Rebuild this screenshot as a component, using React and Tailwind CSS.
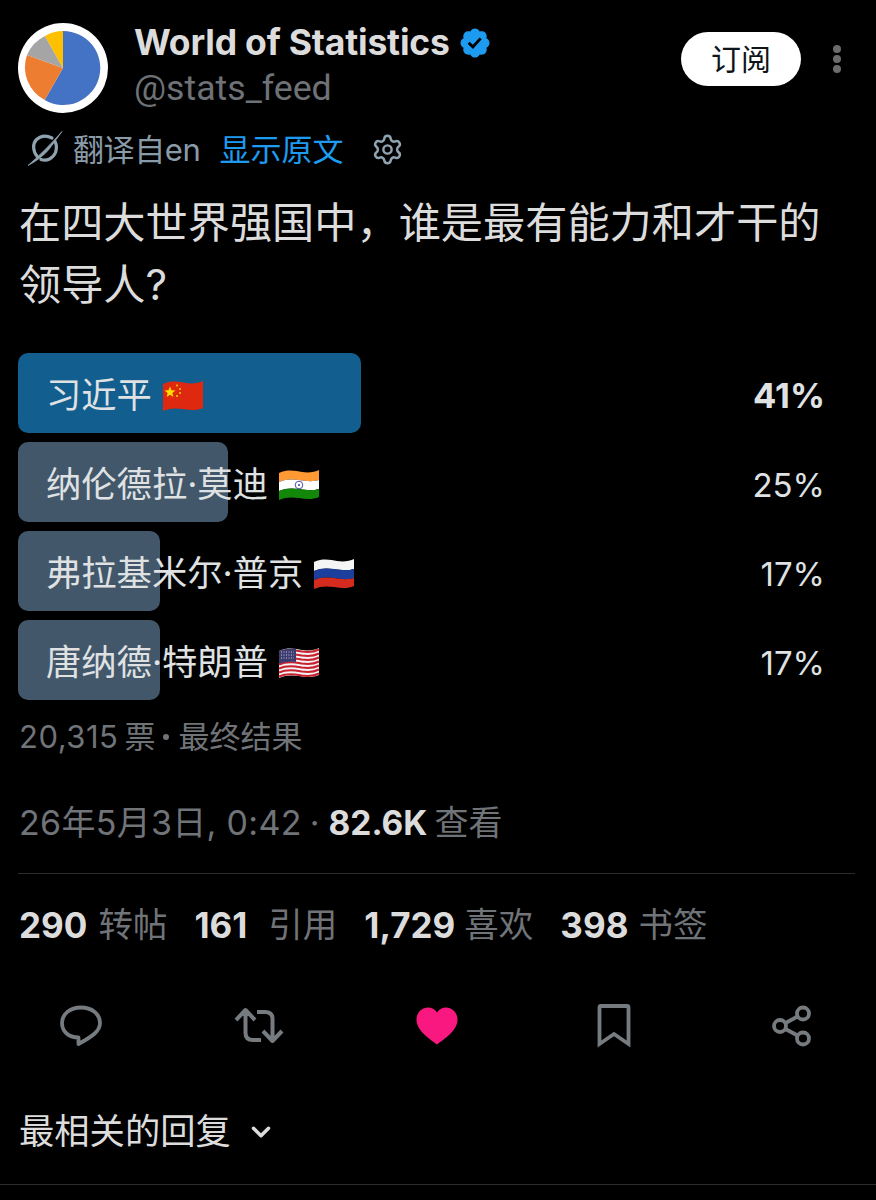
import React from "react";
import { Settings, ChevronDown } from "lucide-react";

const cjk = "font-['Inter','Noto_Sans_CJK_SC',sans-serif]";

function Avatar() {
  return (
    <div className="w-[90px] h-[90px] rounded-full bg-white shrink-0">
      <svg viewBox="0 0 90 90" className="w-[90px] h-[90px]">
        <path d="M45 45L45 8A37 37 0 1 1 26.7 77Z" fill="#4472c4" />
        <path d="M45 45L26.7 77A37 37 0 0 1 9 32Z" fill="#ed7d31" />
        <path d="M45 45L9 32A37 37 0 0 1 27 13Z" fill="#a5a5a5" />
        <path d="M45 45L27 13A37 37 0 0 1 45 8Z" fill="#ffc000" />
      </svg>
    </div>
  );
}

function Verified() {
  return (
    <svg viewBox="0 0 24 24" className="w-[34px] h-[34px]" fill="#1d9bf0">
      <path d="M22.25 12c0-1.43-.88-2.67-2.19-3.34.46-1.39.2-2.9-.81-3.91s-2.52-1.27-3.91-.81c-.66-1.31-1.91-2.19-3.34-2.19s-2.67.88-3.33 2.19c-1.4-.46-2.91-.2-3.92.81s-1.26 2.52-.8 3.91c-1.31.67-2.2 1.91-2.2 3.34s.89 2.67 2.2 3.34c-.46 1.39-.21 2.9.8 3.91s2.52 1.26 3.91.81c.67 1.31 1.91 2.19 3.34 2.19s2.68-.88 3.34-2.19c1.39.45 2.9.2 3.91-.81s1.27-2.52.81-3.91c1.31-.67 2.19-1.91 2.19-3.34zm-11.71 4.2L6.8 12.46l1.41-1.42 2.26 2.26 4.8-5.23 1.47 1.36-6.2 6.77z" />
    </svg>
  );
}

function Grok() {
  return (
    <svg viewBox="0 0 36 36" className="w-[36px] h-[36px]" fill="none" stroke="#8fa3b0">
      <path d="M10.500 26C5.500 20 5.500 12.500 9.500 8.500C14 4.500 20 4.500 25 7" strokeWidth="3.200" strokeLinecap="round" />
      <path d="M14 28.500C20 30.500 26 27.500 28.500 21.500C30 17 29.500 13.500 28 10.500" strokeWidth="3.200" strokeLinecap="round" />
      <path d="M1 34.500C12 25 24 13 35 0.500L21.500 19C15.500 25.500 8 31 1 34.500Z" fill="#8fa3b0" strokeWidth="0.800" />
    </svg>
  );
}

function FlagCN() {
  return (
    <svg viewBox="0 0 42 32" className="w-[42px] h-[32px]">
      <path d="M1 4C10 0 18 2 24 3C31 4 37 3 41 1V28C34 31 28 30 21 29C14 28 7 28 1 31Z" fill="#de2910" />
      <path d="M8 6.500l1.500 3.800 4 .2-3.100 2.500 1 3.900-3.400-2.200-3.400 2.200 1-3.900-3.100-2.500 4-.2z" fill="#ffde00" />
      <circle cx="15" cy="5.500" r="0.900" fill="#ffde00" />
      <circle cx="18" cy="9" r="0.900" fill="#ffde00" />
      <circle cx="18" cy="13" r="0.900" fill="#ffde00" />
      <circle cx="15" cy="16" r="0.900" fill="#ffde00" />
    </svg>
  );
}

function FlagIN() {
  return (
    <svg viewBox="0 0 42 32" className="w-[42px] h-[32px]">
      <path d="M1 4C10 0 18 2 24 3C31 4 37 3 41 1V11C34 13 28 12 21 11C14 10 7 10 1 13Z" fill="#ff9933" />
      <path d="M1 13C7 10 14 10 21 11C28 12 34 13 41 11V20C34 22 28 21 21 20C14 19 7 19 1 22Z" fill="#ffffff" />
      <path d="M1 22C7 19 14 19 21 20C28 21 34 22 41 20V28C34 31 28 30 21 29C14 28 7 28 1 31Z" fill="#138808" />
      <circle cx="21" cy="16" r="3.800" fill="none" stroke="#3b3b98" strokeWidth="0.900" />
      <circle cx="21" cy="16" r="1" fill="#3b3b98" />
    </svg>
  );
}

function FlagRU() {
  return (
    <svg viewBox="0 0 42 32" className="w-[42px] h-[32px]">
      <path d="M1 4C10 0 18 2 24 3C31 4 37 3 41 1V11C34 13 28 12 21 11C14 10 7 10 1 13Z" fill="#f5f5f5" />
      <path d="M1 13C7 10 14 10 21 11C28 12 34 13 41 11V20C34 22 28 21 21 20C14 19 7 19 1 22Z" fill="#1c3f9e" />
      <path d="M1 22C7 19 14 19 21 20C28 21 34 22 41 20V28C34 31 28 30 21 29C14 28 7 28 1 31Z" fill="#d52b1e" />
    </svg>
  );
}

function FlagUS() {
  const stripes = [0, 1, 2, 3, 4, 5, 6];
  return (
    <svg viewBox="0 0 42 32" className="w-[42px] h-[32px]">
      <path d="M1 4C10 0 18 2 24 3C31 4 37 3 41 1V28C34 31 28 30 21 29C14 28 7 28 1 31Z" fill="#f2f2f2" />
      {stripes.map((i) => (
        <path
          key={i}
          d={`M1 ${5.500 + i * 4}C10 ${1.500 + i * 4} 18 ${3.500 + i * 4} 24 ${4.500 + i * 4}C31 ${5.500 + i * 4} 37 ${4.500 + i * 4} 41 ${2.500 + i * 4}`}
          fill="none"
          stroke="#c8202f"
          strokeWidth="2"
        />
      ))}
      <path d="M1 4C6 2 11 1.500 18 2V15C11 14.500 6 15 1 17Z" fill="#3c3b6e" />
      <path d="M3 5h13M3 8h13M3 11h13" stroke="#c9c9e0" strokeWidth="1" strokeDasharray="1 1.500" />
    </svg>
  );
}

const rows = [
  { label: "习近平", flag: <FlagCN />, pct: "41%", w: "w-[343px]", bar: "bg-[#125e8f]", bold: true },
  { label: "纳伦德拉·莫迪", flag: <FlagIN />, pct: "25%", w: "w-[210px]", bar: "bg-[#42576a]" },
  { label: "弗拉基米尔·普京", flag: <FlagRU />, pct: "17%", w: "w-[142px]", bar: "bg-[#42576a]" },
  { label: "唐纳德·特朗普", flag: <FlagUS />, pct: "17%", w: "w-[142px]", bar: "bg-[#42576a]" },
];

function PollRow({ r }) {
  return (
    <div className="flex items-center h-[80px]">
      <div className="relative flex-1 h-full flex items-center">
        <div className={`absolute left-0 top-0 h-full rounded-[10px] ${r.w} ${r.bar}`} />
        <div className="relative pl-[28px] pt-[6px] flex items-center gap-[10px] text-[35.3px] leading-none text-[#dfe1e2]">
          <span>{r.label}</span>
          {r.flag}
        </div>
      </div>
      <span className={`pt-[6px] leading-none text-[#dfe1e2] ${r.bold ? "font-bold text-[34.5px]" : "text-[33px]"}`}>{r.pct}</span>
    </div>
  );
}

function Stat({ n, label, gap }) {
  return (
    <div className={`flex items-center ${gap}`}>
      <span className="font-bold text-[35px] text-[#dcdcdc]">{n}</span>
      <span className="text-[#707478] text-[34.5px]">{label}</span>
    </div>
  );
}

export default function App() {
  return (
    <div className={`w-[876px] h-[1200px] bg-black overflow-hidden flex flex-col ${cjk}`}>
      <div className="flex items-start pl-[18px] pr-[35px] pt-[23px]">
        <Avatar />
        <div className="ml-[26px] flex-1 flex flex-col">
          <div className="flex items-center gap-[8px] h-[40px]">
            <span className="text-[35.5px] leading-none font-bold text-[#dcdcdc] tracking-[-0.2px]">World of Statistics</span>
            <Verified />
          </div>
          <span className="mt-[3px] text-[35.7px] leading-[44px] text-[#6e7276] font-['Roboto','Noto_Sans_CJK_SC',sans-serif]">@stats_feed</span>
        </div>
        <div className="mt-[9px] w-[120px] h-[54px] rounded-full bg-white flex items-center justify-center text-[30px] text-[#0f1419]">订阅</div>
        <div className="ml-[32px] mt-[22px] flex flex-col gap-[2px]">
          <div className="w-[8px] h-[8px] rounded-full bg-[#6b6b6b]" />
          <div className="w-[8px] h-[8px] rounded-full bg-[#6b6b6b]" />
          <div className="w-[8px] h-[8px] rounded-full bg-[#6b6b6b]" />
        </div>
      </div>

      <div className="flex items-center pl-[27px] mt-[17px] h-[38px]">
        <Grok />
        <span className="ml-[10px] text-[31px] leading-none tracking-[-0.4px] text-[#8a9ba8]">翻译自en</span>
        <span className="ml-[19px] text-[31px] leading-none text-[#1d9bf0]">显示原文</span>
        <Settings className="ml-[28px] w-[33px] h-[33px] text-[#8fa3b0]" strokeWidth={1.8} />
      </div>

      <div className="pl-[19px] pr-[30px] mt-[24px] text-[42.2px] leading-[62px] text-[#dcdcdc]">
        在四大世界强国中，谁是最有能力和才干的领导人?
      </div>

      <div className="pl-[18px] pr-[51px] mt-[37px] flex flex-col gap-[9px]">
        {rows.map((r) => (
          <PollRow key={r.label} r={r} />
        ))}
      </div>

      <div className="pl-[19px] mt-[17px] flex items-center text-[31px] leading-[40px] text-[#707478]">
        <span className="tracking-[0.5px]">20,315</span>
        <span className="ml-[6px]">票</span>
        <span className="ml-[8px] w-[6px] h-[6px] rounded-full bg-[#707478]" />
        <span className="ml-[9px]">最终结果</span>
      </div>

      <div className="pl-[19px] mt-[43px] flex items-baseline text-[34px] leading-[46px] text-[#707478]">
        <span className="tracking-[0.3px]">26年5月3日, 0:42</span>
        <span className="ml-[8px]">·</span>
        <span className="ml-[9px] font-bold text-[33.5px] text-[#dcdcdc]">82.6K</span>
        <span className="ml-[7px]">查看</span>
      </div>

      <div className="ml-[18px] mt-[27px] mr-[21px] h-px bg-[#2a2c2e]" />

      <div className="pl-[19px] mt-[28px] flex items-center gap-[27px] leading-[46px]">
        <Stat n="290" label="转帖" gap="gap-[11px]" />
        <Stat n="161" label="引用" gap="gap-[21px]" />
        <Stat n="1,729" label="喜欢" gap="gap-[9px]" />
        <Stat n="398" label="书签" gap="gap-[10px]" />
      </div>

      <div className="mt-[56px] pl-[60px] pr-[63px] flex items-center justify-between">
        <div className="w-[42px] h-[44px] flex items-center justify-center">
          <svg viewBox="0 0 44 44" className="w-[44px] h-[44px] shrink-0" fill="none" stroke="#767b80" strokeWidth="3.800" strokeLinejoin="round">
            <path d="M22 3.500C32.500 3.500 41 9.500 41 19C41 27 34 32 19.500 40V33.500C9 33.500 3 27 3 19C3 10 11 3.500 22 3.500Z" />
          </svg>
        </div>
        <div className="w-[42px] h-[44px] flex items-center justify-center">
          <svg viewBox="0 0 50 38" className="w-[50px] h-[38px] shrink-0" fill="none" stroke="#767b80" strokeWidth="4" strokeLinejoin="round">
            <path d="M2 13L11.500 3L21 13M11.500 4V26C11.500 31 14 33 19 33H27" />
            <path d="M23 5H31C36 5 38.500 7.500 38.500 12V34M29 24L38.500 34L48 24" />
          </svg>
        </div>
        <div className="w-[42px] h-[44px] flex items-center justify-center">
          <svg viewBox="0 0 42 38" className="w-[42px] h-[38px] shrink-0" fill="#f91880">
            <path d="M21 37.500C14 32 0.500 24 0.500 12.500C0.500 5.500 6 0.500 12 0.500C15.500 0.500 19 2 21 5.500C23 2 26.500 0.500 30 0.500C36 0.500 41.500 5.500 41.500 12.500C41.500 24 28 32 21 37.500Z" />
          </svg>
        </div>
        <div className="w-[42px] h-[44px] flex items-center justify-center">
          <svg viewBox="0 0 34 44" className="w-[34px] h-[44px] shrink-0" fill="none" stroke="#767b80" strokeWidth="3.800" strokeLinejoin="miter">
            <path d="M2.500 40V3.500A1.500 1.500 0 0 1 4 2H30A1.500 1.500 0 0 1 31.500 3.500V40L17 30Z" />
          </svg>
        </div>
        <div className="w-[42px] h-[44px] flex items-center justify-center">
          <svg viewBox="0 0 42 44" className="w-[42px] h-[44px] shrink-0" fill="none" stroke="#767b80" strokeWidth="3.800">
            <circle cx="32" cy="9.500" r="6" />
            <circle cx="9" cy="22" r="6" />
            <circle cx="32" cy="34.500" r="6" />
            <path d="M14.500 19L26.500 12.500M14.500 25L26.500 31.500" />
          </svg>
        </div>
      </div>

      <div className="pl-[19px] mt-[60px] flex items-center gap-[15px] text-[35.3px] leading-[48px] text-[#dcdcdc]">
        <span>最相关的回复</span>
        <ChevronDown className="w-[30px] h-[30px] text-[#dcdcdc]" strokeWidth={2.800} />
      </div>

      <div className="mt-[28px] h-px bg-[#2a2c2e]" />
    </div>
  );
}
